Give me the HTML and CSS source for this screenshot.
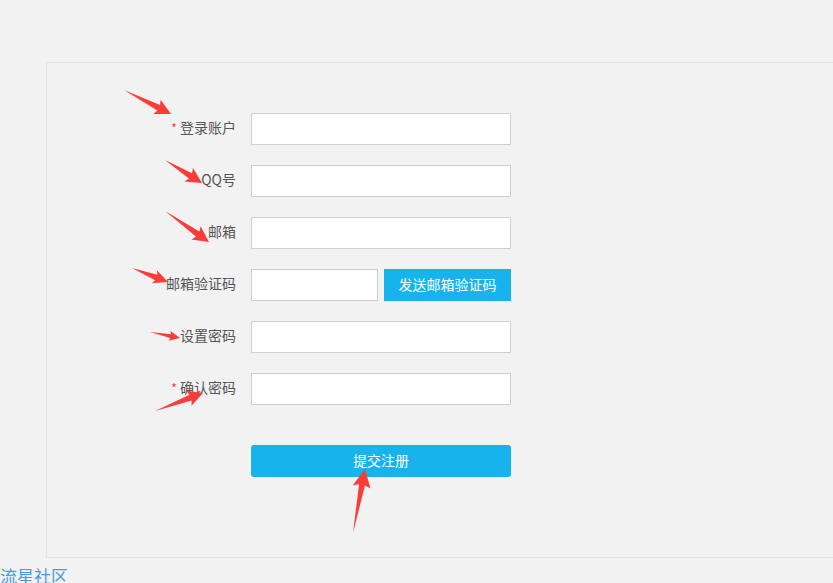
FILE: index.html
```html
<!DOCTYPE html>
<html lang="zh-CN">
<head>
<meta charset="utf-8">
<title>注册</title>
<link rel="stylesheet" href="styles.css">
</head>
<body>
<div class="page">
  <div class="panel">
    <form class="form">
      <div class="row">
        <label class="label"><span class="req">*</span> 登录账户</label>
        <input class="input" type="text">
      </div>
      <div class="row">
        <label class="label">QQ号</label>
        <input class="input" type="text">
      </div>
      <div class="row">
        <label class="label">邮箱</label>
        <input class="input" type="text">
      </div>
      <div class="row">
        <label class="label">邮箱验证码</label>
        <input class="input input-short" type="text">
        <button type="button" class="send-btn">发送邮箱验证码</button>
      </div>
      <div class="row">
        <label class="label">设置密码</label>
        <input class="input" type="password">
      </div>
      <div class="row">
        <label class="label"><span class="req">*</span> 确认密码</label>
        <input class="input" type="password">
      </div>
      <div class="row submit-row">
        <span class="label"></span>
        <button type="button" class="submit-btn">提交注册</button>
      </div>
    </form>
  </div>
  <a class="footer-link" href="#">流星社区</a>
</div>
<svg class="arrows" width="833" height="583" viewBox="0 0 833 583">
  <g fill="#fc3b3b">
    <polygon transform="translate(124,90) rotate(27.05)" points="0,0 39,-3 37,-8 52.8,0 37,8 39,3"/>
    <polygon transform="translate(165,160) rotate(31.9)" points="0,0 30,-3 28,-8 43.6,0 28,8 30,3"/>
    <polygon transform="translate(165,211) rotate(35.2)" points="0,0 40,-3 38,-8 53.8,0 38,8 40,3"/>
    <polygon transform="translate(132,268) rotate(21.25)" points="0,0 26,-3 24,-7 38.6,0 24,7 26,3"/>
    <polygon transform="translate(150,332) rotate(11.3)" points="0,0 21,-2 20,-5 30.6,0 20,5 21,2"/>
    <polygon transform="translate(155,411) rotate(-20.56)" points="0,0 38,-3 36,-8 51.3,0 36,8 38,3"/>
    <polygon transform="translate(353,533) rotate(-79.4)" points="0,0 49,-3 47,-9 65.1,0 47,9 49,3"/>
  </g>
</svg>
</body>
</html>
```

FILE: styles.css
```css
* { box-sizing: border-box; }
html, body {
  margin: 0;
  padding: 0;
  background: #f2f2f2;
}
body {
  width: 833px;
  height: 583px;
  overflow: hidden;
  position: relative;
  font-family: "Microsoft YaHei", "Noto Sans CJK SC", "Liberation Sans", sans-serif;
}
.page {
  padding-top: 62px;
  overflow: hidden;
}
.panel {
  margin-left: 46px;
  width: 900px;
  height: 496px;
  border: 1px solid #e3e3e3;
  background: #f2f2f2;
}
.form {
  padding-top: 50px;
  display: flex;
  flex-direction: column;
  gap: 20px;
}
.row {
  display: flex;
  align-items: center;
  height: 32px;
}
.label {
  width: 189px;
  margin-right: 15px;
  text-align: right;
  font-size: 14px;
  color: #555;
  line-height: 28px;
  padding-bottom: 4px;
  flex: none;
}
.req {
  color: #f03c3c;
  font-size: 12px;
}
.input {
  width: 260px;
  height: 32px;
  border: 1px solid #cfcfcf;
  background: #fff;
  margin: 0;
  padding: 0 8px;
  outline: none;
  flex: none;
}
.input-short {
  width: 127px;
}
.send-btn {
  margin-left: 6px;
  width: 127px;
  height: 32px;
  border: none;
  padding: 0 0 2px;
  background: #16b3ec;
  color: #fff;
  font-family: inherit;
  font-size: 14px;
}
.submit-row {
  margin-top: 20px;
}
.submit-btn {
  width: 260px;
  height: 32px;
  border: none;
  border-radius: 3px;
  padding: 0 0 2px;
  background: #16b3ec;
  color: #fff;
  font-family: inherit;
  font-size: 14px;
}
.footer-link {
  display: block;
  margin-top: 7px;
  font-size: 17px;
  line-height: 22px;
  color: #4a98e4;
  text-decoration: none;
}
.arrows {
  position: absolute;
  left: 0;
  top: 0;
  pointer-events: none;
}
```
